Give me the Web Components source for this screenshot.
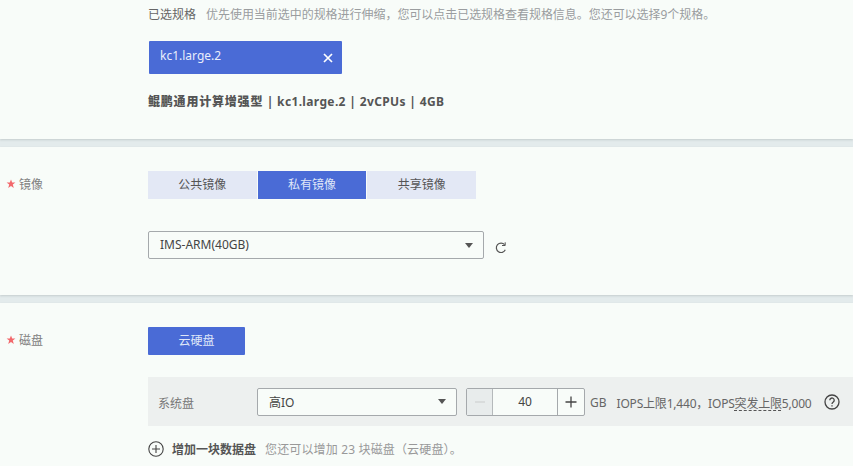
<!DOCTYPE html>
<html lang="zh">
<head>
<meta charset="utf-8">
<title>弹性云服务器</title>
<style>
html, body { margin: 0; height: 466px; overflow: hidden; background: #e3ebec; }
body { font: 12px "Noto Sans", "Noto Sans CJK SC", sans-serif; color: #555; }
</style>
</head>
<body>
<form-page>
  <form-section height="139" pad="7">
    <spec-block></spec-block>
  </form-section>
  <form-section height="148" pad="24" label="镜像" label-top="5">
    <image-block></image-block>
  </form-section>
  <form-section height="163" pad="24" label="磁盘" label-top="5">
    <disk-block></disk-block>
  </form-section>
</form-page>

<script>
const FONT = '"Noto Sans", "Noto Sans CJK SC", sans-serif';

class FormPage extends HTMLElement {
	constructor() {
		super();
		this.attachShadow({ mode: 'open' }).innerHTML = `
<style>
:host { display: flex; flex-direction: column; gap: 8px; width: 853px; }
</style>
<slot></slot>`;
	}
}

class FormSection extends HTMLElement {
	constructor() {
		super();
		const label = this.getAttribute('label');
		this.attachShadow({ mode: 'open' }).innerHTML = `
<style>
:host { display: grid; grid-template-columns: 148px 1fr; background: #f8fcf9; box-sizing: border-box;
	box-shadow: 0 1px 2px rgba(60, 70, 70, .18);
	height: ${this.getAttribute('height')}px; padding-top: ${this.getAttribute('pad')}px; font-family: ${FONT}; }
.label { padding: ${this.getAttribute('label-top') || 0}px 0 0 6px; display: flex; gap: 3px; align-items: center; align-self: start; height: 16px; color: #808080; }
.label svg { display: block; }
</style>
<div class="label">${label ? `<svg width="10" height="10" viewBox="0 0 10 10"><path fill="#f2686c" d="M5 .6l1.2 3h3.2L6.8 5.6l1 3.3L5 7 2.200 8.900l1-3.300L.6 3.600h3.200z"/></svg><span>${label}</span>` : ''}</div>
<div><slot></slot></div>`;
	}
}

class SpecBlock extends HTMLElement {
	constructor() {
		super();
		this.attachShadow({ mode: 'open' }).innerHTML = `
<style>
:host { display: block; }
.head { display: flex; gap: 10px; height: 16px; line-height: 16px; color: #666; }
.tip { color: #9a9d9f; letter-spacing: -.04px; }
.tag { margin: 18px 0 0 1px; width: 193px; height: 33px; box-sizing: border-box; background: #4a6bd6; border-radius: 1px; color: #e9eefb;
	display: flex; align-items: center; justify-content: space-between; padding: 0 9px 4px 11px; }
.tag svg { display: block; margin-top: 4px; }
.sum { margin-top: 20px; font-weight: 700; color: #555; letter-spacing: .35px; line-height: 16px; }
.sum b { letter-spacing: .8px; }
</style>
<div class="head"><span>已选规格</span><span class="tip">优先使用当前选中的规格进行伸缩，您可以点击已选规格查看规格信息。您还可以选择9个规格。</span></div>
<div class="tag"><span>kc1.large.2</span><svg width="10" height="10" viewBox="0 0 10 10"><path d="M1 1l8 8M9 1l-8 8" stroke="#fff" stroke-width="1.700" fill="none"/></svg></div>
<div class="sum"><b>鲲鹏通用计算增强型</b> | kc1.large.2 | 2vCPUs | 4GB</div>`;
	}
}

class TabGroup extends HTMLElement {
	constructor() {
		super();
		const active = this.getAttribute('active');
		const tabs = this.getAttribute('tabs').split(',');
		this.attachShadow({ mode: 'open' }).innerHTML = `
<style>
:host { display: flex; gap: 1px; width: 328px; }
div { flex: 1; height: 28px; line-height: 28px; text-align: center; background: #e3e8f5; color: #555; }
div.on { background: #4a6bd6; color: #dfe6f8; }
</style>
${tabs.map((t) => `<div class="${t === active ? 'on' : ''}">${t}</div>`).join('')}`;
	}
}

class SelectBox extends HTMLElement {
	constructor() {
		super();
		this.attachShadow({ mode: 'open' }).innerHTML = `
<style>
:host { display: flex; align-items: center; justify-content: space-between; box-sizing: border-box; height: 28px;
	border: 1px solid #a5a9ac; border-radius: 2px; background: #f8fcf9; padding: 0 10px 0 11px; color: #444;
	width: var(--w, 200px); }
span { padding: var(--text-pad, 0 0 2px); }
i { width: 0; height: 0; border: 4px solid transparent; border-top: 5px solid #555; border-bottom: 0; }
</style>
<span><slot></slot></span><i></i>`;
	}
}

class ImageBlock extends HTMLElement {
	constructor() {
		super();
		this.attachShadow({ mode: 'open' }).innerHTML = `
<style>
:host { display: block; }
.row { display: flex; align-items: flex-start; gap: 10px; margin-top: 32px; }
select-box { --w: 336px; }
svg { display: block; margin-top: 10px; }
</style>
<tab-group tabs="公共镜像,私有镜像,共享镜像" active="私有镜像"></tab-group>
<div class="row"><select-box>IMS-ARM(40GB)</select-box>
<svg width="14" height="14" viewBox="0 0 14 14" fill="none" stroke="#555" stroke-width="1.200"><path d="M11.300 8.800A4.700 4.700 0 1 1 10.600 3.700"/><path d="M11.200 1.300v3.200H8" stroke-width="1"/></svg></div>`;
	}
}

class NumberStepper extends HTMLElement {
	constructor() {
		super();
		this.attachShadow({ mode: 'open' }).innerHTML = `
<style>
:host { display: flex; box-sizing: border-box; width: 119px; height: 28px; border: 1px solid #a5a9ac; border-radius: 2px; background: #f8fcf9; color: #444; }
div { display: flex; align-items: center; justify-content: center; }
.minus { width: 26px; box-sizing: border-box; background: #e8ecec; border-right: 1px solid #b5b9bb; }
.val { flex: 1; }
.plus { width: 27px; box-sizing: border-box; border-left: 1px solid #a5a9ac; }
</style>
<div class="minus"><svg width="12" height="12" viewBox="0 0 12 12"><path d="M1 6h10" stroke="#cfd3d3" stroke-width="1.200"/></svg></div>
<div class="val"><slot></slot></div>
<div class="plus"><svg width="14" height="14" viewBox="0 0 14 14"><path d="M1.500 7h11M7 1.500v11" stroke="#444" stroke-width="1.300"/></svg></div>`;
	}
}

class DiskBlock extends HTMLElement {
	constructor() {
		super();
		this.attachShadow({ mode: 'open' }).innerHTML = `
<style>
:host { display: block; }
.btn { width: 97px; height: 28px; line-height: 27px; text-align: center; background: #4a6bd6; color: #dfe6f8; border-radius: 1px; }
.panel { margin-top: 22px; width: 705px; height: 49px; background: #edf0ef; display: flex; align-items: center; box-sizing: border-box; padding: 0 10px; color: #666; }
.name { width: 99px; color: #777; padding-top: 3px; }
select-box { --w: 200px; --text-pad: 0; }
number-stepper { margin-left: 9px; }
.unit { margin-left: 5px; color: #666; padding-top: 2px; }
.iops { margin-left: 10px; color: #666; white-space: nowrap; letter-spacing: -.2px; padding-top: 2px; }
.iops u { text-decoration: underline dashed #555 1px; text-underline-offset: 2px; }
.help { margin-left: auto; display: block; margin-right: 3px; }
.add { display: flex; align-items: center; margin-top: 15px; height: 16px; }
.add svg { display: block; }
.add b { margin-left: 8px; font-weight: 700; color: #555; }
.add span { margin-left: 9px; color: #999; letter-spacing: .15px; }
</style>
<div class="btn">云硬盘</div>
<div class="panel">
	<span class="name">系统盘</span>
	<select-box>高IO</select-box>
	<number-stepper>40</number-stepper>
	<span class="unit">GB</span>
	<span class="iops">IOPS上限1,440，IOPS<u>突发上限</u>5,000</span>
	<svg class="help" width="16" height="16" viewBox="0 0 16 16" fill="none" stroke="#444" stroke-width="1.300"><circle cx="8" cy="8" r="7"/><path d="M5.800 6.200a2.200 2.200 0 1 1 3.500 1.800C8.500 8.600 8 9 8 10"/><path d="M8 11.200v1.200"/></svg>
</div>
<div class="add">
	<svg width="16" height="16" viewBox="0 0 16 16" fill="none" stroke="#444" stroke-width="1.100"><circle cx="8" cy="8" r="7.200"/><path d="M4 8h8M8 4v8"/></svg>
	<b>增加一块数据盘</b><span>您还可以增加 23 块磁盘（云硬盘）。</span>
</div>`;
	}
}

customElements.define('form-page', FormPage);
customElements.define('form-section', FormSection);
customElements.define('spec-block', SpecBlock);
customElements.define('tab-group', TabGroup);
customElements.define('select-box', SelectBox);
customElements.define('image-block', ImageBlock);
customElements.define('number-stepper', NumberStepper);
customElements.define('disk-block', DiskBlock);
</script>
</body>
</html>
